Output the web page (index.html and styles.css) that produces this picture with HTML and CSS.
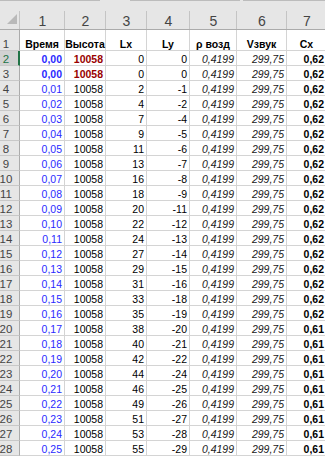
FILE: index.html
```html
<!DOCTYPE html>
<html lang="ru">
<head>
<meta charset="utf-8">
<title>Лист</title>
<link rel="stylesheet" href="styles.css">
</head>
<body>
<div class="sheet">
  <div class="topline"><span class="seg s1"></span><span class="gp g1"></span><span class="seg s2"></span><span class="gp g2"></span><span class="seg s3"></span></div>
  <div class="row hdr">
    <div class="hc corner"><span class="tri"></span></div>
    <div class="hc">1</div><div class="hc">2</div><div class="hc">3</div><div class="hc">4</div><div class="hc">5</div><div class="hc">6</div><div class="hc">7</div>
  </div>
  <div class="row r1">
    <div class="rh">1</div>
    <div class="c ctr bld">Время</div><div class="c ctr bld">Высота</div><div class="c ctr bld">Lx</div><div class="c ctr bld">Ly</div><div class="c ctr bld">ρ возд</div><div class="c ctr bld">Vзвук</div><div class="c ctr bld">Cx</div>
  </div>
  <div class="row"><div class="rh sel">2</div><div class="c blue bld">0,00</div><div class="c red bld">10058</div><div class="c">0</div><div class="c">0</div><div class="c it">0,4199</div><div class="c it">299,75</div><div class="c bld">0,62</div></div>
  <div class="row"><div class="rh">3</div><div class="c blue bld">0,00</div><div class="c red bld">10058</div><div class="c">0</div><div class="c">0</div><div class="c it">0,4199</div><div class="c it">299,75</div><div class="c bld">0,62</div></div>
  <div class="row"><div class="rh">4</div><div class="c blue">0,01</div><div class="c">10058</div><div class="c">2</div><div class="c">-1</div><div class="c it">0,4199</div><div class="c it">299,75</div><div class="c bld">0,62</div></div>
  <div class="row"><div class="rh">5</div><div class="c blue">0,02</div><div class="c">10058</div><div class="c">4</div><div class="c">-2</div><div class="c it">0,4199</div><div class="c it">299,75</div><div class="c bld">0,62</div></div>
  <div class="row"><div class="rh">6</div><div class="c blue">0,03</div><div class="c">10058</div><div class="c">7</div><div class="c">-4</div><div class="c it">0,4199</div><div class="c it">299,75</div><div class="c bld">0,62</div></div>
  <div class="row"><div class="rh">7</div><div class="c blue">0,04</div><div class="c">10058</div><div class="c">9</div><div class="c">-5</div><div class="c it">0,4199</div><div class="c it">299,75</div><div class="c bld">0,62</div></div>
  <div class="row"><div class="rh">8</div><div class="c blue">0,05</div><div class="c">10058</div><div class="c">11</div><div class="c">-6</div><div class="c it">0,4199</div><div class="c it">299,75</div><div class="c bld">0,62</div></div>
  <div class="row"><div class="rh">9</div><div class="c blue">0,06</div><div class="c">10058</div><div class="c">13</div><div class="c">-7</div><div class="c it">0,4199</div><div class="c it">299,75</div><div class="c bld">0,62</div></div>
  <div class="row"><div class="rh">10</div><div class="c blue">0,07</div><div class="c">10058</div><div class="c">16</div><div class="c">-8</div><div class="c it">0,4199</div><div class="c it">299,75</div><div class="c bld">0,62</div></div>
  <div class="row"><div class="rh">11</div><div class="c blue">0,08</div><div class="c">10058</div><div class="c">18</div><div class="c">-9</div><div class="c it">0,4199</div><div class="c it">299,75</div><div class="c bld">0,62</div></div>
  <div class="row"><div class="rh">12</div><div class="c blue">0,09</div><div class="c">10058</div><div class="c">20</div><div class="c">-11</div><div class="c it">0,4199</div><div class="c it">299,75</div><div class="c bld">0,62</div></div>
  <div class="row"><div class="rh">13</div><div class="c blue">0,10</div><div class="c">10058</div><div class="c">22</div><div class="c">-12</div><div class="c it">0,4199</div><div class="c it">299,75</div><div class="c bld">0,62</div></div>
  <div class="row"><div class="rh">14</div><div class="c blue">0,11</div><div class="c">10058</div><div class="c">24</div><div class="c">-13</div><div class="c it">0,4199</div><div class="c it">299,75</div><div class="c bld">0,62</div></div>
  <div class="row"><div class="rh">15</div><div class="c blue">0,12</div><div class="c">10058</div><div class="c">27</div><div class="c">-14</div><div class="c it">0,4199</div><div class="c it">299,75</div><div class="c bld">0,62</div></div>
  <div class="row"><div class="rh">16</div><div class="c blue">0,13</div><div class="c">10058</div><div class="c">29</div><div class="c">-15</div><div class="c it">0,4199</div><div class="c it">299,75</div><div class="c bld">0,62</div></div>
  <div class="row"><div class="rh">17</div><div class="c blue">0,14</div><div class="c">10058</div><div class="c">31</div><div class="c">-16</div><div class="c it">0,4199</div><div class="c it">299,75</div><div class="c bld">0,62</div></div>
  <div class="row"><div class="rh">18</div><div class="c blue">0,15</div><div class="c">10058</div><div class="c">33</div><div class="c">-18</div><div class="c it">0,4199</div><div class="c it">299,75</div><div class="c bld">0,62</div></div>
  <div class="row"><div class="rh">19</div><div class="c blue">0,16</div><div class="c">10058</div><div class="c">35</div><div class="c">-19</div><div class="c it">0,4199</div><div class="c it">299,75</div><div class="c bld">0,62</div></div>
  <div class="row"><div class="rh">20</div><div class="c blue">0,17</div><div class="c">10058</div><div class="c">38</div><div class="c">-20</div><div class="c it">0,4199</div><div class="c it">299,75</div><div class="c bld">0,61</div></div>
  <div class="row"><div class="rh">21</div><div class="c blue">0,18</div><div class="c">10058</div><div class="c">40</div><div class="c">-21</div><div class="c it">0,4199</div><div class="c it">299,75</div><div class="c bld">0,61</div></div>
  <div class="row"><div class="rh">22</div><div class="c blue">0,19</div><div class="c">10058</div><div class="c">42</div><div class="c">-22</div><div class="c it">0,4199</div><div class="c it">299,75</div><div class="c bld">0,61</div></div>
  <div class="row"><div class="rh">23</div><div class="c blue">0,20</div><div class="c">10058</div><div class="c">44</div><div class="c">-24</div><div class="c it">0,4199</div><div class="c it">299,75</div><div class="c bld">0,61</div></div>
  <div class="row"><div class="rh">24</div><div class="c blue">0,21</div><div class="c">10058</div><div class="c">46</div><div class="c">-25</div><div class="c it">0,4199</div><div class="c it">299,75</div><div class="c bld">0,61</div></div>
  <div class="row"><div class="rh">25</div><div class="c blue">0,22</div><div class="c">10058</div><div class="c">49</div><div class="c">-26</div><div class="c it">0,4199</div><div class="c it">299,75</div><div class="c bld">0,61</div></div>
  <div class="row"><div class="rh">26</div><div class="c blue">0,23</div><div class="c">10058</div><div class="c">51</div><div class="c">-27</div><div class="c it">0,4199</div><div class="c it">299,75</div><div class="c bld">0,61</div></div>
  <div class="row"><div class="rh">27</div><div class="c blue">0,24</div><div class="c">10058</div><div class="c">53</div><div class="c">-28</div><div class="c it">0,4199</div><div class="c it">299,75</div><div class="c bld">0,61</div></div>
  <div class="row"><div class="rh">28</div><div class="c blue">0,25</div><div class="c">10058</div><div class="c">55</div><div class="c">-29</div><div class="c it">0,4199</div><div class="c it">299,75</div><div class="c bld">0,61</div></div>
</div>
</body>
</html>
```
FILE: styles.css
```css
* { box-sizing: border-box; }
html, body { margin: 0; padding: 0; background: #ffffff; }
body { font-family: "Liberation Sans", Arial, sans-serif; }

.sheet {
  width: 325px;
  height: 456px;
  overflow: hidden;
  background: #ffffff;
}

.topline { display: flex; height: 1px; width: 327px; background: #e6e6e6; }
.topline .seg { background: #bcbcbc; }
.s1 { width: 100px; }
.g1 { width: 30px; }
.s2 { width: 110px; }
.g2 { width: 3px; }
.s3 { flex: 1; }

.row {
  display: grid;
  grid-template-columns: 20px 45px 41px 41px 43px 47px 50px 40px;
  width: 327px;
  height: 15px;
}

.hdr {
  height: 29px;
  background: #e6e6e6;
  border-bottom: 1px solid #ababab;
}

.hc {
  display: flex;
  align-items: flex-end;
  justify-content: center;
  font-size: 14px;
  line-height: 16px;
  color: #444444;
  background: linear-gradient(#c4c4c4, #c4c4c4) right bottom / 1px 18px no-repeat;
}

.corner { justify-content: flex-end; }
.tri {
  width: 0;
  height: 0;
  border-left: 10px solid transparent;
  border-bottom: 10px solid #b9b9b9;
  margin: 0 3px 5px 0;
}

.r1 { height: 21px; }

.rh {
  display: flex;
  align-items: flex-end;
  justify-content: center;
  padding-right: 7px;
  font-size: 11.5px;
  line-height: 12px;
  color: #444444;
  background: #e6e6e6;
  border-right: 1px solid #ababab;
  border-bottom: 1px solid #c8c8c8;
  white-space: nowrap;
}

.rh.sel {
  background: #d2d2d2;
  color: #217346;
  border-right: 2px solid #217346;
  padding-right: 6px;
}

.c {
  display: flex;
  align-items: flex-end;
  justify-content: flex-end;
  padding: 0 2px 0 2px;
  font-size: 10.5px;
  line-height: 12px;
  color: #000000;
  border-right: 1px solid #d4d4d4;
  border-bottom: 1px solid #d4d4d4;
  white-space: nowrap;
}

.ctr { justify-content: center; }
.bld { font-weight: bold; }
.it { font-style: italic; color: #1a1a1a; }
.blue { color: #2a2aff; }
.red { color: #990000; }
```
